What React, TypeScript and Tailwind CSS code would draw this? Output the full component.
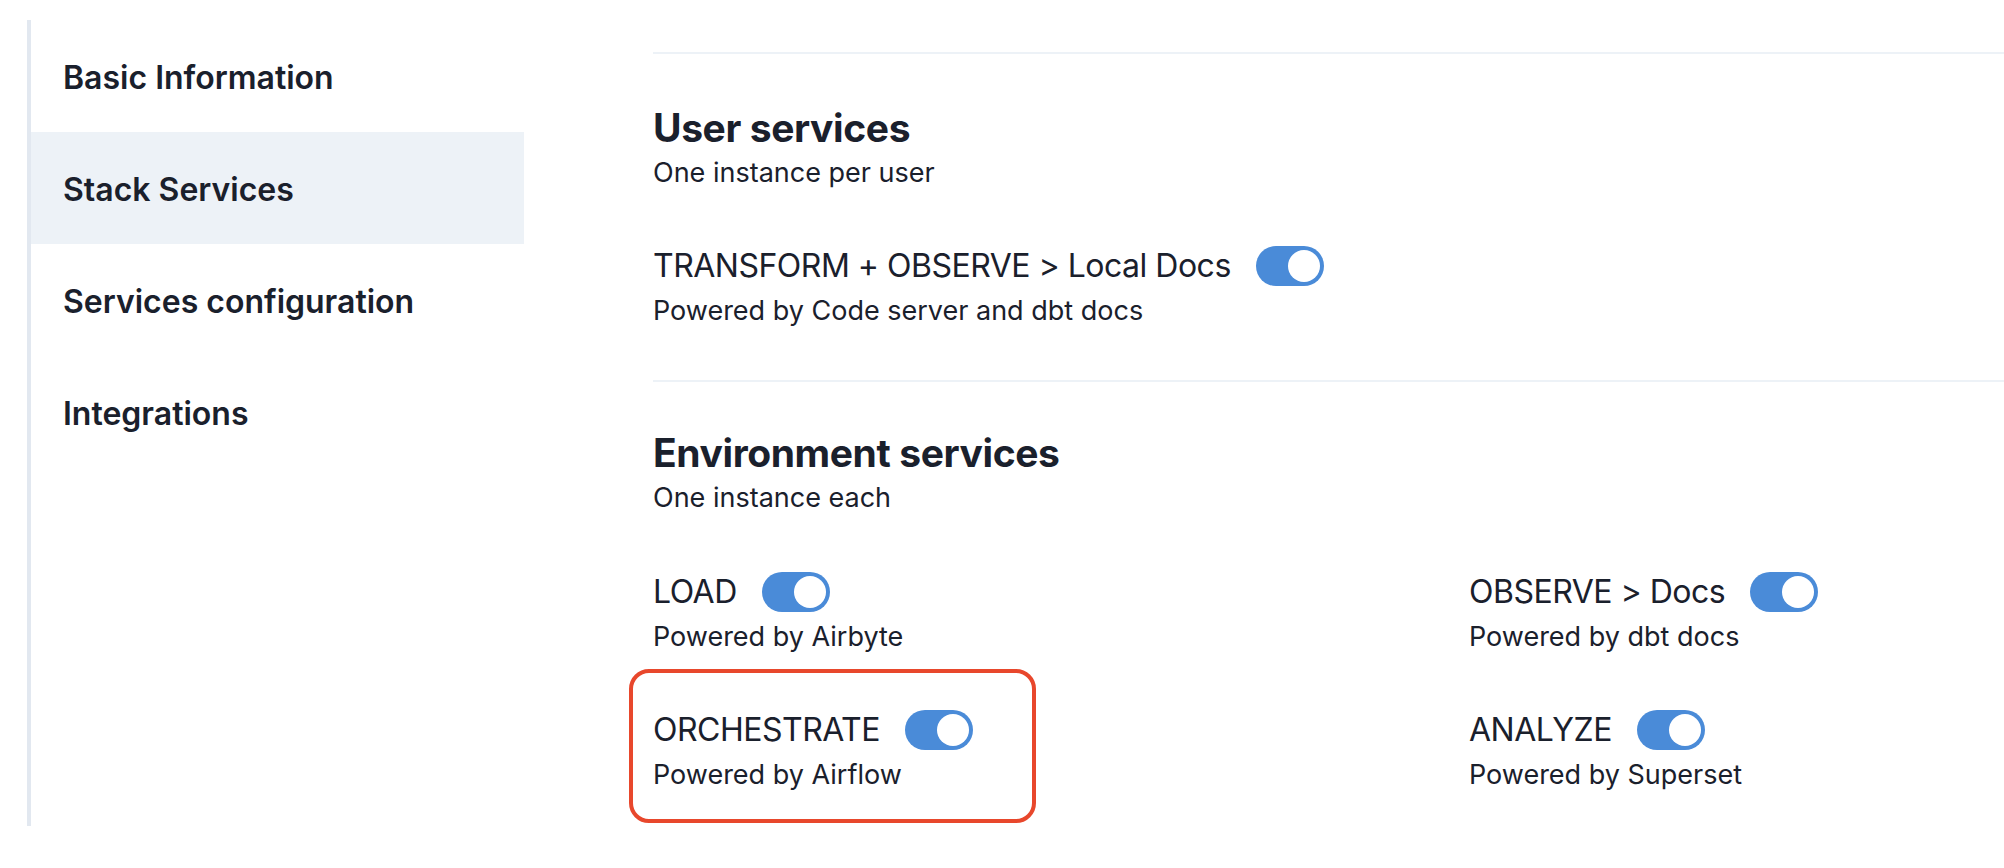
import { useState } from 'react'

const navItems = ['Basic Information', 'Stack Services', 'Services configuration', 'Integrations']

type Service = { label: string; powered: string; highlight?: boolean }

const userServices: Service[] = [
  { label: 'TRANSFORM + OBSERVE > Local Docs', powered: 'Powered by Code server and dbt docs' },
]

const envServices: Service[] = [
  { label: 'LOAD', powered: 'Powered by Airbyte' },
  { label: 'OBSERVE > Docs', powered: 'Powered by dbt docs' },
  { label: 'ORCHESTRATE', powered: 'Powered by Airflow', highlight: true },
  { label: 'ANALYZE', powered: 'Powered by Superset' },
]

function Toggle({ on, onChange }: { on: boolean; onChange: () => void }) {
  return (
    <button
      type="button"
      onClick={onChange}
      className={`flex h-10 w-[68px] shrink-0 items-center rounded-full p-1 transition-colors ${
        on ? 'justify-end bg-[#4a8bd8]' : 'justify-start bg-[#cbd5e0]'
      }`}
    >
      <span className="block h-8 w-8 rounded-full bg-white" />
    </button>
  )
}

function ServiceItem({ service }: { service: Service }) {
  const [on, setOn] = useState(true)
  return (
    <div className="relative">
      {/* annotation frame */}
      {service.highlight && (
        <div className="pointer-events-none absolute -top-[41px] -left-[24px] h-[154px] w-[407px] rounded-[20px] border-4 border-[#e8472c]" />
      )}
      <div className="flex items-center gap-[25px]">
        <span className="text-[32px] leading-10 tracking-[-0.5px]">{service.label}</span>
        <Toggle on={on} onChange={() => setOn(!on)} />
      </div>
      <p className="mt-[5px] text-[27px] leading-10">{service.powered}</p>
    </div>
  )
}

function SectionHeader({ title, subtitle }: { title: string; subtitle: string }) {
  return (
    <div>
      <h2 className="text-[39px] font-bold leading-[48px] tracking-[-0.4px]">{title}</h2>
      <p className="mt-px text-[27px] leading-10">{subtitle}</p>
    </div>
  )
}

export default function App() {
  const [active, setActive] = useState(1)

  return (
    <div
      className="h-[868px] w-full overflow-hidden bg-white pt-5 text-[#1a202c]"
      style={{ fontFamily: 'Inter, "Noto Sans", sans-serif' }}
    >
      <div className="flex">
        {/* Sidebar */}
        <nav className="ml-[27px] w-[497px] shrink-0 border-l-4 border-[#e2e8f0]">
          {navItems.map((item, i) => (
            <button
              key={item}
              type="button"
              onClick={() => setActive(i)}
              className={`flex h-[112px] w-full items-center pt-1 pl-8 text-left text-[32px] font-semibold ${
                active === i ? 'bg-[#edf2f7]' : ''
              }`}
            >
              {item}
            </button>
          ))}
        </nav>

        {/* Main */}
        <main className="ml-[129px] flex-1 pt-8 pb-[31px]">
          <div className="h-[2px] bg-[#edf2f7]" />

          <section className="pt-[50px] pb-[49px]">
            <SectionHeader title="User services" subtitle="One instance per user" />
            <div className="mt-[53px]">
              {userServices.map((s) => (
                <ServiceItem key={s.label} service={s} />
              ))}
            </div>
          </section>

          <div className="h-[2px] bg-[#edf2f7]" />

          <section className="pt-[47px]">
            <SectionHeader title="Environment services" subtitle="One instance each" />
            <div className="mt-[54px] grid grid-cols-[816px_1fr] gap-y-[53px]">
              {envServices.map((s) => (
                <ServiceItem key={s.label} service={s} />
              ))}
            </div>
          </section>
        </main>
      </div>
    </div>
  )
}
